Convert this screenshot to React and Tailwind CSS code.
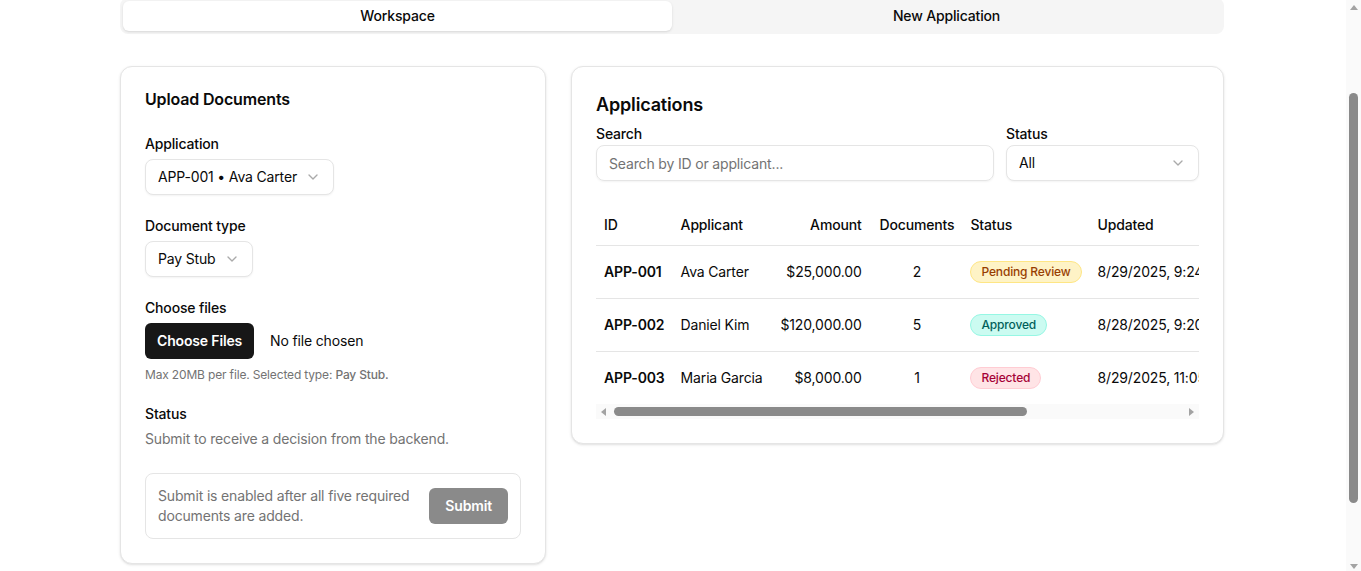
import React, { useLayoutEffect, useRef } from 'react'
import { ChevronDown } from 'lucide-react'

const rows = [
  { id: 'APP-001', name: 'Ava Carter', amount: '$25,000.00', docs: 2, status: 'Pending Review', updated: '8/29/2025, 9:24:10 AM' },
  { id: 'APP-002', name: 'Daniel Kim', amount: '$120,000.00', docs: 5, status: 'Approved', updated: '8/28/2025, 9:20:42 AM' },
  { id: 'APP-003', name: 'Maria Garcia', amount: '$8,000.00', docs: 1, status: 'Rejected', updated: '8/29/2025, 11:05:31 AM' },
]

const badgeStyles = {
  'Pending Review': 'bg-amber-100 border-amber-200 text-amber-800',
  Approved: 'bg-teal-100 border-teal-200 text-teal-800',
  Rejected: 'bg-rose-100 border-rose-200 text-rose-800',
}

function SelectBox({ value, full }) {
  return (
    <button
      type="button"
      className={`h-9 px-3 flex items-center gap-2 rounded-lg border border-neutral-200 bg-white text-sm text-neutral-950 shadow-xs ${full ? 'w-full justify-between' : 'w-fit'}`}
    >
      <span>{value}</span>
      <ChevronDown className="w-4 h-4 text-neutral-500 opacity-60" />
    </button>
  )
}

function StatusBadge({ status }) {
  return (
    <span className={`inline-flex items-center rounded-full border px-2.5 py-0.5 text-xs font-medium ${badgeStyles[status]}`}>
      {status}
    </span>
  )
}

// little arrow glyph used by the scrollbars
function Arrow({ dir }) {
  const pts = {
    up: '4,1 8,6 0,6',
    down: '0,1 8,1 4,6',
    left: '6,0 6,8 1,4',
    right: '1,0 1,8 6,4',
  }
  return (
    <svg width="8" height="8" viewBox="0 0 8 8" className="fill-[#a3a3a3]">
      <polygon points={pts[dir]} />
    </svg>
  )
}

export default function App() {
  const scrollRef = useRef(null)

  useLayoutEffect(() => {
    // page is shown scrolled down past the header
    if (scrollRef.current) scrollRef.current.scrollTop = 108
  }, [])

  return (
    <div
      className="h-screen flex bg-white text-neutral-950 tracking-[-0.01em]"
      style={{ fontFamily: 'Inter, "Noto Sans", sans-serif' }}
    >
      <div ref={scrollRef} className="flex-1 min-w-0 overflow-hidden">
        <div className="mx-auto max-w-6xl pl-[23px] pr-[25px] pt-[106px] pb-[82px]">
          {/* tabs */}
          <div className="h-9 p-[3px] rounded-lg bg-neutral-100 grid grid-cols-2">
            <button className="rounded-md bg-white shadow-sm text-sm font-medium">Workspace</button>
            <button className="rounded-md text-sm font-medium">New Application</button>
          </div>

          <div className="mt-[32px] grid grid-cols-[426px_minmax(0,1fr)] gap-[25px] items-start">
            {/* upload card */}
            <div className="rounded-xl border border-neutral-200 bg-white shadow-sm p-6">
              <h3 className="text-base font-semibold leading-4">Upload Documents</h3>

              <div className="mt-[27px] flex flex-col gap-[21px]">
                <div className="flex flex-col gap-[5px]">
                  <label className="text-sm font-medium leading-5">Application</label>
                  <SelectBox value="APP-001 • Ava Carter" />
                </div>

                <div className="flex flex-col gap-[5px]">
                  <label className="text-sm font-medium leading-5">Document type</label>
                  <SelectBox value="Pay Stub" />
                </div>

                <div className="flex flex-col gap-[5px]">
                  <label className="text-sm font-medium leading-5">Choose files</label>
                  <div className="flex items-center">
                    <span className="h-9 px-3 flex items-center rounded-md bg-neutral-900 text-white text-sm font-semibold">Choose Files</span>
                    <span className="ml-4 text-sm">No file chosen</span>
                  </div>
                  <p className="mt-[3px] text-xs text-neutral-500">
                    Max 20MB per file. Selected type: <span className="font-medium">Pay Stub.</span>
                  </p>
                </div>

                <div className="flex flex-col gap-[5px]">
                  <label className="text-sm font-medium leading-5">Status</label>
                  <p className="text-sm text-neutral-500 leading-5">Submit to receive a decision from the backend.</p>
                </div>
              </div>

              <div className="mt-6 rounded-lg border border-neutral-200 p-3 flex items-center justify-between gap-2">
                <p className="text-sm text-neutral-500 leading-5 whitespace-nowrap">
                  Submit is enabled after all five required<br />documents are added.
                </p>
                <button disabled className="h-9 px-4 rounded-md bg-neutral-900 text-white text-sm font-semibold opacity-50 shrink-0">
                  Submit
                </button>
              </div>
            </div>

            {/* applications card */}
            <div className="min-w-0 rounded-xl border border-neutral-200 bg-white shadow-sm p-6">
              <h3 className="text-lg font-semibold leading-7">Applications</h3>

              <div className="mt-[5px] grid grid-cols-[1fr_193px] gap-3">
                <div className="flex flex-col gap-px">
                  <label className="text-sm font-medium leading-5">Search</label>
                  <input
                    placeholder="Search by ID or applicant..."
                    className="h-9 w-full rounded-lg border border-neutral-200 px-3 text-sm shadow-xs placeholder:text-neutral-500 outline-none"
                  />
                </div>
                <div className="flex flex-col gap-px">
                  <label className="text-sm font-medium leading-5">Status</label>
                  <SelectBox value="All" full />
                </div>
              </div>

              <div className="mt-6 overflow-hidden">
                <table className="w-full text-sm whitespace-nowrap border-collapse">
                  <thead>
                    <tr className="border-b border-neutral-200">
                      <th className="h-10 px-2 text-left font-medium">ID</th>
                      <th className="h-10 px-2 text-left font-medium">Applicant</th>
                      <th className="h-10 pl-[10px] pr-2 text-right font-medium">Amount</th>
                      <th className="h-10 pl-[10px] pr-2 text-center font-medium">Documents</th>
                      <th className="h-10 px-2 text-left font-medium">Status</th>
                      <th className="h-10 px-2 text-left font-medium">Updated</th>
                      <th className="h-10 px-2 text-right font-medium">Actions</th>
                    </tr>
                  </thead>
                  <tbody>
                    {rows.map((r, i) => (
                      <tr key={r.id} className={i < rows.length - 1 ? 'border-b border-neutral-200' : ''}>
                        <td className="h-[53px] px-2 font-semibold">{r.id}</td>
                        <td className="h-[53px] px-2">{r.name}</td>
                        <td className="h-[53px] pl-[10px] pr-2 text-right">{r.amount}</td>
                        <td className="h-[53px] pl-[10px] pr-2 text-center">{r.docs}</td>
                        <td className="h-[53px] px-2"><StatusBadge status={r.status} /></td>
                        <td className="h-[53px] px-2">{r.updated}</td>
                        <td className="h-[53px] px-2 text-right">
                          <span className="inline-flex w-[150px] justify-end">
                            <span className="h-8 px-3 inline-flex items-center rounded-md border border-neutral-200 text-sm font-medium">View</span>
                          </span>
                        </td>
                      </tr>
                    ))}
                  </tbody>
                </table>
              </div>

              {/* horizontal scrollbar of the table */}
              <div className="h-[15px] flex items-center bg-[#fafafa]">
                <div className="w-[15px] flex justify-center"><Arrow dir="left" /></div>
                <div className="flex-1 flex items-center pl-[3px]">
                  <div className="h-[9px] w-[413px] rounded-full bg-[#8a8a8a]" />
                </div>
                <div className="w-[15px] flex justify-center"><Arrow dir="right" /></div>
              </div>
            </div>
          </div>
        </div>
      </div>

      {/* page scrollbar */}
      <div className="w-[15px] shrink-0 flex flex-col items-center bg-[#fafafa]">
        <div className="h-[15px] flex items-center"><Arrow dir="up" /></div>
        <div className="mt-[78px] h-[410px] w-[9px] rounded-full bg-[#8a8a8a]" />
        <div className="flex-1" />
        <div className="h-[15px] flex items-end"><Arrow dir="down" /></div>
      </div>
    </div>
  )
}
